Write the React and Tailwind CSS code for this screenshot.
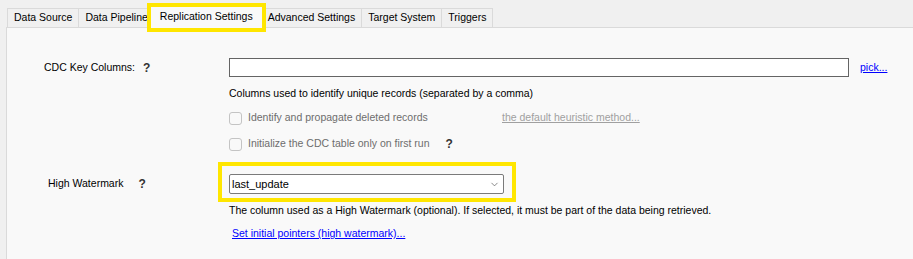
import { ChevronDown } from "lucide-react";

const tabs = [
  "Data Source",
  "Data Pipeline",
  "Replication Settings",
  "Advanced Settings",
  "Target System",
  "Triggers",
];

const Help = () => (
  <span className="text-[12px] font-bold text-[#333]">?</span>
);

const Checkbox = ({ label, labelWidth, children }) => (
  <div className="flex items-center h-[14px]">
    <span className="w-[13px] h-[13px] rounded-[3px] border border-[#c4c4c4] bg-[#f9f9f9]" />
    <span className={`ml-[6px] text-[#6d6d6d] ${labelWidth}`}>{label}</span>
    {children}
  </div>
);

export default function App() {
  return (
    <div
      className="w-[913px] h-[259px] bg-[#f0f0f0] text-[10.5px] text-black overflow-hidden"
      style={{ fontFamily: '"Liberation Sans", Arial, sans-serif' }}
    >
      {/* tab strip */}
      <div className="flex items-end h-[27px] pl-[7px]">
        {tabs.map((t) => {
          const active = t === "Replication Settings";
          return active ? (
            <div key={t} className="relative -mb-px z-10 -ml-[5px] -mr-px">
              <div className="h-[24px] px-[9px] bg-[#f9f9f9] border border-b-0 border-[#dadada] flex items-center">
                {t}
              </div>
              <div className="absolute -left-[3px] -right-[3px] -top-[1px] bottom-[-4px] border-4 border-[#ffe600]" />
            </div>
          ) : (
            <div
              key={t}
              className="h-[19px] px-[6px] bg-[#f0f0f0] border border-b-0 border-[#dadada] -ml-px first:ml-0 flex items-center"
            >
              {t}
            </div>
          );
        })}
      </div>

      {/* panel */}
      <div className="ml-[6px] h-[232px] bg-[#f9f9f9] border-t border-l border-[#dadada] pt-[30px]">
        <div className="flex items-center">
          <div className="w-[222px] flex items-center pl-[37px]">
            <span>CDC Key Columns:</span>
            <span className="ml-[8px]"><Help /></span>
          </div>
          <div className="w-[620px] h-[19px] bg-white border border-[#646464]" />
          <a className="ml-[11px] text-[#0000ff] underline">pick...</a>
        </div>

        <div className="ml-[222px] mt-[10px] h-[14px] flex items-center">
          Columns used to identify unique records (separated by a comma)
        </div>

        <div className="ml-[222px] mt-[10px] flex flex-col gap-[12px]">
          <Checkbox label="Identify and propagate deleted records" labelWidth="w-[254px]">
            <a className="text-[#a0a0a0] underline">
              the default heuristic method...
            </a>
          </Checkbox>
          <Checkbox label="Initialize the CDC table only on first run">
            <span className="ml-[16px]"><Help /></span>
          </Checkbox>
        </div>

        <div className="flex items-center mt-[23px]">
          <div className="w-[222px] flex items-center pl-[41px]">
            <span>High Watermark</span>
            <span className="ml-[15px]"><Help /></span>
          </div>
          <div className="relative">
            <div className="w-[275px] h-[20px] bg-white border border-[#7a7a7a] rounded-[2px] flex items-center justify-between pl-[2px] pr-[3px] text-[11px]">
              <span>last_update</span>
              <ChevronDown className="w-[11px] h-[11px] text-[#555]" strokeWidth={1.5} />
            </div>
            <div className="absolute -left-[11px] -right-[12px] -top-[12px] -bottom-[8px] border-4 border-[#ffe600]" />
          </div>
        </div>

        <div className="ml-[222px] mt-[10px] h-[14px] flex items-center">
          The column used as a High Watermark (optional). If selected, it must be part of the data being retrieved.
        </div>

        <div className="ml-[225px] mt-[9px] h-[14px] flex items-center">
          <a className="text-[#0000ff] underline">Set initial pointers (high watermark)...</a>
        </div>
      </div>
    </div>
  );
}
